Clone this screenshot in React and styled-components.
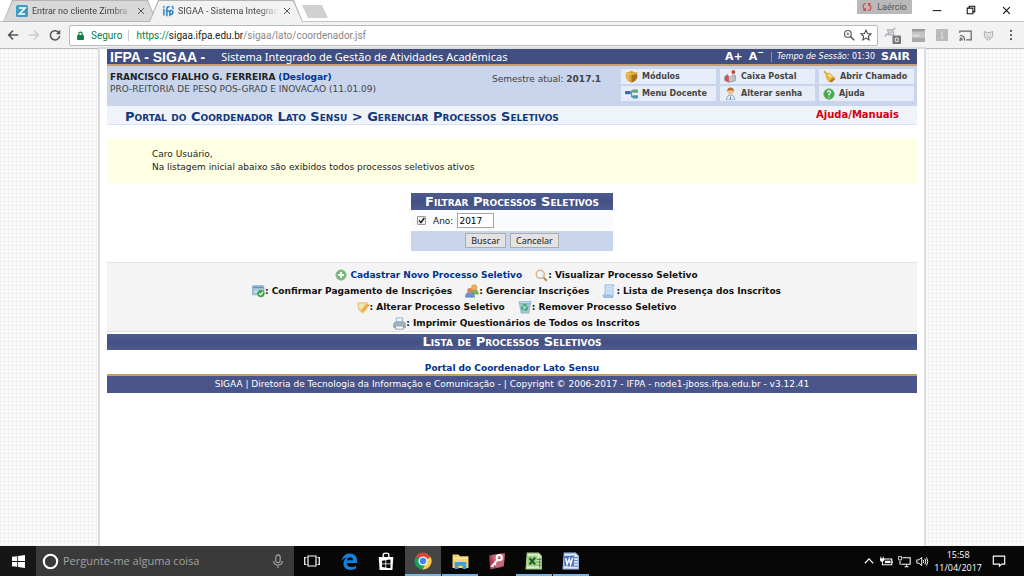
import styled, { createGlobalStyle, css } from 'styled-components'
import { useState } from 'react'

const verdana = '"DejaVu Sans", Verdana, sans-serif'
const tahoma = '"Noto Sans", Tahoma, sans-serif'
const segoe = '"Open Sans", "Segoe UI", sans-serif'
const roboto = 'Roboto, sans-serif'

const GlobalStyle = createGlobalStyle`
  * {
    box-sizing: border-box;
  }
  body {
    margin: 0;
    font-family: ${verdana};
    font-size: 9px;
    color: #222;
  }
  button, input {
    font-family: inherit;
    font-size: inherit;
    margin: 0;
  }
  button {
    cursor: pointer;
  }
  a {
    color: inherit;
    text-decoration: none;
  }
  svg {
    display: block;
    flex: none;
  }
`

const Screen = styled.div`
  display: flex;
  flex-direction: column;
  height: 100vh;
  overflow: hidden;
`

/* ---------- browser ---------- */

const TabStrip = styled.header`
  display: flex;
  align-items: flex-end;
  height: 22px;
  padding-left: 3px;
  background: #fff;
  border-bottom: 1px solid #c4c4c4;
`
const Tab = styled.div`
  position: relative;
  display: flex;
  align-items: center;
  gap: 4px;
  width: 154px;
  height: 22px;
  margin: 0 -8px -1px 0;
  padding: 0 12px 0 13px;
  font-family: ${roboto};
  color: #444;
  z-index: ${p => (p.$active ? 2 : 1)};

  &::before, &::after {
    content: '';
    position: absolute;
    inset: 0;
    clip-path: polygon(0 100%, 9px 0, calc(100% - 9px) 0, 100% 100%);
    background: #b4b4b4;
    z-index: -1;
  }
  &::after {
    inset: 1px 1px ${p => (p.$active ? '0' : '1px')} 1px;
    background: ${p => (p.$active ? '#f2f2f2' : '#d9d9d9')};
  }
`
const TabTitle = styled.span`
  flex: 1;
  overflow: hidden;
  white-space: nowrap;
  line-height: 14px;
  mask-image: linear-gradient(90deg, #000 80%, transparent);
`
const PlainButton = styled.button`
  display: flex;
  align-items: center;
  justify-content: center;
  padding: 0;
  border: 0;
  background: none;
  color: ${p => p.$color || '#555'};
`
const NewTab = styled.button`
  width: 26px;
  height: 13px;
  margin: 0 0 3px 7px;
  padding: 0;
  border: 0;
  background: #d0d0d0;
  clip-path: polygon(0 0, 20px 0, 100% 100%, 6px 100%);
`
const WindowControls = styled.div`
  display: flex;
  align-self: flex-start;
  margin-left: auto;
`
const Profile = styled.button`
  display: flex;
  align-items: center;
  justify-content: center;
  gap: 5px;
  width: 55px;
  height: 14px;
  margin-right: 8px;
  padding: 0;
  border: 0;
  background: #b9b9b9;
  color: #555;
  font-family: ${roboto};
`
const WindowButton = styled(PlainButton)`
  width: 34px;
  height: 20px;
  color: #111;

  &:last-child {
    width: 36px;
  }
`
const Toolbar = styled.nav`
  display: flex;
  align-items: center;
  height: 27px;
  flex: none;
  padding: 0 7px 0 6px;
  background: #f2f2f2;
  border-bottom: 1px solid #b8b8b8;
`
const NavGroup = styled.div`
  display: flex;
  gap: 7px;
  margin-right: 7px;
`
const AddressBar = styled.div`
  display: flex;
  align-items: center;
  flex: 1;
  height: 21px;
  padding: 0 5px 0 6px;
  background: #fff;
  border: 1px solid #b9b9b9;
  border-radius: 2px;
  font-family: ${roboto};
  font-size: 10px;
`
const Secure = styled.span`
  padding: 0 6px 0 6px;
  margin-right: 7px;
  border-right: 1px solid #ccc;
  color: #0b8043;
`
const Url = styled.span`
  flex: 1;
  color: #888;
`
const Scheme = styled.span`
  color: #0b8043;
`
const Host = styled.span`
  color: #222;
`
const AddressIcons = styled.div`
  display: flex;
  gap: 5px;
`
const Extensions = styled.div`
  display: flex;
  align-items: center;
  gap: 11px;
  margin-left: 6px;
`

/* ---------- page ---------- */

const Viewport = styled.main`
  flex: 1;
  min-height: 0;
  background-color: #fcfcfc;
  background-image:
    linear-gradient(#f1f1f1 1px, transparent 1px),
    linear-gradient(90deg, #f1f1f1 1px, transparent 1px);
  background-size: 4px 4px;
`
const Page = styled.div`
  height: 100%;
  margin: 0 100px;
  padding: 0 7px;
  background: #fff;
  box-shadow: 0 0 0 2px #dcdcdc;
`
const TopBar = styled.div`
  display: flex;
  align-items: center;
  height: 17px;
  padding: 0 7px 0 3px;
  background: #404e82;
  border-bottom: 2px solid #c4a077;
  color: #fff;
`
const Brand = styled.h1`
  margin: 0 16px 0 0;
  font: bold 14px/14px "Liberation Sans", Arial, sans-serif;
`
const SystemName = styled.span`
  flex: 1;
  font: 11px/14px ${tahoma};
`
const ZoomButton = styled.button`
  padding: 0;
  margin-right: 6px;
  border: 0;
  background: none;
  color: #fff;
  font: bold 11px/14px ${verdana};

  sup {
    font-size: 8px;
    line-height: 1px;
  }
`
const Session = styled.span`
  padding-left: 5px;
  margin: 0 6px 0 1px;
  border-left: 1px solid #9a8f83;
  font-size: 8px;
  line-height: 10px;
`
const Leave = styled.a`
  font: bold 11px/14px ${verdana};
`
const UserPanel = styled.section`
  display: flex;
  justify-content: space-between;
  height: 40px;
  padding: 3px 3px 0 3px;
  background: #c8d5ec;
`
const UserInfo = styled.div`
  width: 382px;
  padding-top: 2px;
  font-size: 9px;
  line-height: 12px;
  color: #444;
`
const UserName = styled.strong`
  color: #222;
`
const BlueLink = styled.a`
  color: #003390;
  font-weight: bold;
`
const Semester = styled.div`
  flex: 1;
  padding-top: 4px;
  font-size: 9px;
  line-height: 12px;
  color: #444;
`
const Shortcuts = styled.div`
  display: grid;
  grid-template-columns: repeat(3, 95px);
  grid-auto-rows: 15px;
  gap: 2px 4px;
`
const Shortcut = styled.a`
  display: flex;
  align-items: center;
  gap: 4px;
  padding-left: 4px;
  background: #e7edf8;
  color: #444;
  font-size: 8px;
  font-weight: bold;
`
const Breadcrumb = styled.div`
  display: flex;
  justify-content: space-between;
  height: 19px;
  padding: 0 18px;
  background: #eff3fa;
  border-bottom: 1px solid #d9e2f0;
`
const PageTitle = styled.h2`
  margin: 0;
  padding-top: 2px;
  font-size: 13px;
  line-height: 18px;
  font-variant: small-caps;
  color: #12387c;
`
const HelpLink = styled.a`
  font-size: 10px;
  line-height: 18px;
  font-weight: bold;
  color: #d3000f;
`
const Notice = styled.div`
  margin-top: 14px;
  padding: 9px 45px 10px;
  background: #ffffe4;
  font: 9px/13px ${verdana};
`
const NoticeLine = styled.p`
  margin: 0;
`
const FilterForm = styled.form`
  width: 202px;
  margin: 9px auto 11px;
`
const Heading = styled.h3`
  margin: 0;
  height: ${p => p.$height || 17}px;
  background: linear-gradient(#4d5c90, #435084 50%, #4d5c90);
  color: #fff;
  font-size: 13px;
  line-height: ${p => p.$height || 17}px;
  font-variant: small-caps;
  text-align: center;
`
const FilterRow = styled.div`
  display: flex;
  align-items: center;
  height: 21px;
  padding-left: 6px;
  background: #f9fbfd;
  font-family: ${verdana};
`
const Check = styled.input`
  width: 9px;
  height: 9px;
  margin: 0 7px 0 0;
  appearance: none;
  border: 1px solid #999;
  border-radius: 1px;
  background: #eee;

  &:checked {
    background: #eee url("data:image/svg+xml,%3Csvg xmlns='http://www.w3.org/2000/svg' viewBox='0 0 7 7'%3E%3Cpath d='M1 3.5l2 2L6.3 1' fill='none' stroke='%23222' stroke-width='1.5'/%3E%3C/svg%3E");
  }
`
const YearInput = styled.input`
  width: 37px;
  height: 15px;
  margin-left: 4px;
  padding: 0 1px;
  border: 1px solid #a5a5a5;
  background: #fff;
`
const FilterActions = styled.div`
  display: flex;
  justify-content: center;
  gap: 4px;
  height: 20px;
  padding-top: 2px;
  background: #c8d5ec;
`
const ActionButton = styled.button`
  height: 15px;
  padding: 0 5px;
  border: 1px solid #adadad;
  background: #e3e3e3;
  color: #222;
  font: 9px/13px ${tahoma};
`
const Legend = styled.div`
  display: flex;
  flex-direction: column;
  margin-bottom: 2px;
  padding: 4px 0 0 9px;
  background: #f4f4f4;
  border: 1px solid #e2e2e2;
  border-width: 1px 0;
`
const LegendRow = styled.div`
  display: flex;
  justify-content: center;
  gap: 13px;
  height: 16px;
`
const LegendItem = styled.span`
  display: flex;
  align-items: center;
  font-size: 9px;
  font-weight: bold;
  white-space: pre;
  color: #111;

  ${p => p.$link && css`
    gap: 3px;
    color: #003390;
  `}
`
const BackLine = styled.div`
  padding-top: 12px;
  text-align: center;
  font: bold 9px/12px ${verdana};
`
const Footer = styled.footer`
  height: 19px;
  background: #49558a;
  border-top: 2px solid #c4a060;
  color: #fff;
  text-align: center;
  font-size: 9px;
  line-height: 17px;
`

/* ---------- taskbar ---------- */

const Taskbar = styled.footer`
  display: flex;
  align-items: stretch;
  flex: none;
  height: 30px;
  background: #070707;
  color: #fff;
`
const Start = styled(PlainButton)`
  width: 36px;
  background: #161616;
  color: #fff;
`
const Search = styled.label`
  display: flex;
  align-items: center;
  gap: 4px;
  width: 258px;
  padding: 0 9px 0 6px;
  background: #3a3a3a;
`
const SearchInput = styled.input`
  flex: 1;
  min-width: 0;
  padding: 0;
  border: 0;
  outline: 0;
  background: none;
  color: #fff;
  font: 11px/16px ${segoe};

  &::placeholder {
    color: #a2a2a2;
    opacity: 1;
  }
`
const TaskButton = styled(PlainButton)`
  width: 36px;
  margin-right: 1px;
  color: #fff;
  background: ${p => (p.$active ? '#454545' : 'none')};
  border-bottom: 2px solid ${p => (p.$open ? '#76b4e8' : 'transparent')};
  border-top: 2px solid transparent;
`
const Tray = styled.div`
  display: flex;
  align-items: center;
  gap: 5px;
  margin-left: auto;
  padding-right: 18px;
`
const Clock = styled.time`
  margin: 0 5px 0 0;
  text-align: center;
  font: 9px/13px ${segoe};
`

/* ---------- icons ---------- */

const Svg = ({ size = 12, box = 16, children }) => (
  <svg width={size} height={size} viewBox={`0 0 ${box} ${box}`} fill="none" aria-hidden="true">
    {children}
  </svg>
)
const CloseIcon = ({ size = 8 }) => (
  <Svg size={size}><path d="M2 2l12 12M14 2L2 14" stroke="currentColor" strokeWidth="2" /></Svg>
)
const ZimbraIcon = () => (
  <Svg size={12}>
    <rect width="16" height="16" rx="2" fill="#3b9fc4" />
    <path d="M4 4h8L4.500 12H12" stroke="#fff" strokeWidth="2.200" />
  </Svg>
)
const SigaaIcon = () => (
  <Svg size={12}>
    <path d="M2.500 5v9M6.500 15V5q0-3 3.500-3M5 8h5M10.500 15V7M10.500 7.500q4-1 4 2t-4 3M13 1.500q2 1 2 4" stroke="#2585c8" strokeWidth="2" />
    <circle cx="2.500" cy="2.500" r="1.500" fill="#62b2e2" />
  </Svg>
)
const BackIcon = () => (
  <Svg size={14}><path d="M14 8H3M8 3L3 8l5 5" stroke="currentColor" strokeWidth="1.700" /></Svg>
)
const ForwardIcon = () => (
  <Svg size={14}><path d="M2 8h11M8 3l5 5-5 5" stroke="currentColor" strokeWidth="1.700" /></Svg>
)
const ReloadIcon = () => (
  <Svg size={14}>
    <path d="M12.500 5.500A5.300 5.300 0 1 0 13.300 9" stroke="currentColor" strokeWidth="1.800" />
    <path d="M14 2v5H9z" fill="currentColor" />
  </Svg>
)
const LockIcon = () => (
  <Svg size={9}>
    <rect x="2" y="7" width="12" height="9" rx="1" fill="#0b8043" />
    <path d="M5 7V5a3 3 0 0 1 6 0v2" stroke="#0b8043" strokeWidth="2" />
  </Svg>
)
const LensIcon = () => (
  <Svg size={12}>
    <circle cx="6.500" cy="6.500" r="4.500" stroke="#555" strokeWidth="1.500" />
    <path d="M10 10l5 5" stroke="#555" strokeWidth="2" />
    <path d="M4.500 6.500h4M6.500 4.500v4" stroke="#555" />
  </Svg>
)
const StarIcon = () => (
  <Svg size={12}>
    <path d="M8 1.500l2 4.500 4.800.5-3.600 3.200 1 4.800L8 12l-4.200 2.500 1-4.800L1.200 6.500 6 6z" stroke="#444" strokeWidth="1.400" />
  </Svg>
)
const PaintIcon = () => (
  <Svg size={17} box={24}>
    <path d="M1 13l4-4M5 3l2 8M5 11h9l-2-7M6 4h7l3-3" stroke="#a6acb4" strokeWidth="1.800" />
    <circle cx="9.500" cy="7.500" r="2" fill="#b9bfc8" />
    <rect x="12" y="12" width="12" height="12" rx="1" fill="#777" />
    <rect x="16" y="15.500" width="4" height="5" rx="1" stroke="#e5e5e5" strokeWidth="1.500" />
  </Svg>
)
const BannerIcon = () => (
  <Svg size={13}>
    <rect width="16" height="16" fill="#c4c4c4" />
    <path d="M0 1.500h16" stroke="#9c9c9c" strokeWidth="3" />
    <path d="M0 11h16v5H0z" fill="#a9a9a9" />
    <path d="M1 8h8" stroke="#e6e6e6" strokeWidth="2" />
  </Svg>
)
const InfoIcon = () => (
  <Svg size={12}>
    <rect width="16" height="16" rx="1" fill="#bababa" />
    <path d="M8 4v8M6 4h3M6 12h4" stroke="#ddd" strokeWidth="1.500" />
  </Svg>
)
const CastIcon = () => (
  <Svg size={13}>
    <path d="M1 5V2.500h14v11H9M1 8q6 0 6 6M1 11q3 0 3 3" stroke="#666" strokeWidth="1.500" />
    <circle cx="1.500" cy="13.500" r="1.200" fill="#666" />
  </Svg>
)
const ShieldIcon = () => (
  <Svg size={11}>
    <path d="M2 2l3 1.500h6L14 2v6q0 4-6 7-6-3-6-7z" fill="#e6e6e6" stroke="#aaa" strokeWidth="1.400" />
    <path d="M5 7h1M10 7h1M6 10q2 1.500 4 0" stroke="#999" strokeWidth="1.400" />
  </Svg>
)
const DotsIcon = () => (
  <Svg size={12}>
    <circle cx="8" cy="2.500" r="1.500" fill="#555" />
    <circle cx="8" cy="8" r="1.500" fill="#555" />
    <circle cx="8" cy="13.500" r="1.500" fill="#555" />
  </Svg>
)
const SyncIcon = () => (
  <Svg size={10}>
    <path d="M6 2Q1 3 2 9l3 4M2 13.500h3.500V10M10 14q5-1 4-7l-3-4M14 2.500h-3.500V6" stroke="#d2504b" strokeWidth="2" />
  </Svg>
)
const ModulesIcon = () => (
  <Svg size={13}>
    <path d="M1 3q4 0 7-2 3 2 7 2v6q-1 5-7 6.500Q2 14 1 9z" fill="#dba436" />
    <path d="M8 5l7-2v6q-1 5-7 6.500z" fill="#a9711b" />
    <path d="M1.500 4L8 5.500 14.500 4M3.500 6v6" stroke="#f5d478" strokeWidth="1.200" />
  </Svg>
)
const MenuIcon = () => (
  <Svg size={13}>
    <path d="M5 7h3V5h3M8 7v5h3" stroke="#4d9e9c" strokeWidth="1.500" />
    <rect y="5" width="7" height="4" rx="1" fill="#386eaa" />
    <rect x="9" y="3" width="7" height="4" rx="1" fill="#5ba973" />
    <rect x="9" y="10" width="7" height="4" rx="1" fill="#4c91bf" />
  </Svg>
)
const MailboxIcon = () => (
  <Svg size={13}>
    <path d="M1 8l4-3 9 2v6l-8 2-5-2z" fill="#bfc4cc" stroke="#858c98" />
    <path d="M1 8.500q2-4 5-1V15l-5-2z" fill="#c9555c" />
    <path d="M10 7V1h3v3h-2" fill="#d84242" stroke="#b53434" />
    <path d="M4 5l4-3 3 4-4 2z" fill="#fff" stroke="#bbb" strokeWidth=".6" />
  </Svg>
)
const PersonIcon = () => (
  <Svg size={13}>
    <path d="M3 16q0-6 5-6t5 6z" fill="#e8edf5" stroke="#8693a8" />
    <circle cx="8" cy="5.500" r="3.800" fill="#f2c395" />
    <path d="M3.800 5.500q0-5 4.200-5t4.200 5Q8 2.500 3.800 5.500z" fill="#b3702b" />
    <path d="M8 11l-1 4h2z" fill="#3b75b5" />
  </Svg>
)
const BellIcon = () => (
  <Svg size={13}>
    <path d="M2 1l3 3q4-1 6 3l4 3-7 5-3-4Q3 9 4 5L1 3z" fill="#eebb38" stroke="#c48a22" strokeWidth=".6" />
    <ellipse cx="11.500" cy="12.500" rx="3.500" ry="1.600" transform="rotate(-35 11.500 12.500)" fill="#b07c20" />
    <path d="M6 6q3 0 4 3" stroke="#fff0a8" strokeWidth="1.800" />
  </Svg>
)
const HelpIcon = () => (
  <Svg size={12}>
    <circle cx="8" cy="8" r="7" fill="#46a849" stroke="#6fb872" />
    <path d="M5.800 6q.2-2.200 2.200-2.200T10.200 6Q10 7.500 8 8.200V10M8 11.500v1.500" stroke="#fff" strokeWidth="1.700" />
  </Svg>
)
const AddIcon = () => (
  <Svg size={12}>
    <circle cx="8" cy="8" r="7" fill="#74b874" stroke="#9bc79a" />
    <path d="M8 4v8M4 8h8" stroke="#fff" strokeWidth="2.500" />
  </Svg>
)
const ViewIcon = () => (
  <Svg size={13}>
    <path d="M10 10l4.500 4.500" stroke="#bc8548" strokeWidth="2.500" />
    <circle cx="6.500" cy="6.500" r="5" fill="#eef3f7" stroke="#d8b48d" strokeWidth="1.800" />
    <path d="M4 6q.5-2 2.500-2" stroke="#fff" strokeWidth="1.500" />
  </Svg>
)
const PaymentIcon = () => (
  <Svg size={13}>
    <rect x=".5" y="1" width="14" height="11" rx="1" fill="#a9c8df" stroke="#7fa3bd" />
    <path d="M1 3h13" stroke="#6a93b3" strokeWidth="1.800" />
    <path d="M3 8h4" stroke="#e6f0f6" strokeWidth="1.500" />
    <circle cx="11" cy="10.500" r="4.500" fill="#41a34c" />
    <path d="M9 10.500l1.700 1.700L13.500 8.500" stroke="#fff" strokeWidth="1.500" />
  </Svg>
)
const GroupIcon = () => (
  <Svg size={14}>
    <path d="M7 12q0-6 4-6t5 6z" fill="#7cb255" />
    <circle cx="10.500" cy="4" r="3.200" fill="#eab254" stroke="#c88b3c" strokeWidth=".6" />
    <path d="M.5 15q0-5.500 5-5.500t5.500 5.500z" fill="#6695d2" stroke="#4a75af" strokeWidth=".6" />
    <circle cx="5.500" cy="7.500" r="3" fill="#d8806a" />
  </Svg>
)
const ScrollIcon = () => (
  <Svg size={14}>
    <path d="M3.500 1h10.500q-1.500 1-1.500 3v11H2q1.500-1 1.500-3z" fill="#cfe3f7" stroke="#8fb4dd" />
    <path d="M1 12.500h9q0 2 2 2.500H3q-2 0-2-2.500z" fill="#a9cbee" stroke="#78a3d0" strokeWidth=".7" />
    <path d="M5.500 4h5M5.500 6.500h5M5.500 9h5" stroke="#b3d0ec" />
  </Svg>
)
const EditIcon = () => (
  <Svg size={13}>
    <path d="M1 2h12l-1 9-5 4-5-4z" fill="#f3d586" stroke="#e3bf6c" strokeWidth=".8" />
    <path d="M15 5l-7 7-2 1 .5-2.500L13 3.500z" fill="#efab49" stroke="#dc9840" strokeWidth=".7" />
    <path d="M3 5h5M3 7.500h4" stroke="#fff" />
  </Svg>
)
const TrashIcon = () => (
  <Svg size={14}>
    <path d="M1.500 3h13l-2 12h-9z" fill="#9ec6d8" stroke="#85afc4" strokeWidth=".7" />
    <path d="M1 2l14-.5-.5 2.500H1.500z" fill="#c6dfea" stroke="#7aa6bc" strokeWidth=".7" />
    <circle cx="7.500" cy="8.500" r="3" stroke="#3bab62" strokeWidth="2" strokeDasharray="4.500 1.500" />
  </Svg>
)
const PrintIcon = () => (
  <Svg size={13}>
    <path d="M4 7V1h8v6" fill="#eaf3fb" stroke="#8fa8bd" />
    <path d="M1 8l2-2h10l2 2v5H1z" fill="#a3b4c2" stroke="#7a8e9f" />
    <path d="M3 11h10v4H3z" fill="#f5f8fa" stroke="#8496a5" />
  </Svg>
)
const StartIcon = () => (
  <Svg size={13}>
    <path d="M0 2.300l6.500-.9v6.100H0zM7.500 1.200L16 0v7.500H7.500zM0 8.500h6.500v6.100L0 13.700zM7.500 8.500H16V16l-8.500-1.200z" fill="#fff" />
  </Svg>
)
const CortanaIcon = () => (
  <Svg size={17}><circle cx="8" cy="8" r="6.300" stroke="#fff" strokeWidth="2" /></Svg>
)
const MicIcon = () => (
  <Svg size={14}>
    <rect x="5.500" y="1" width="5" height="9" rx="2.500" stroke="#aaa" strokeWidth="1.200" />
    <path d="M3 8q0 4.500 5 4.500T13 8M8 12.500V16" stroke="#aaa" strokeWidth="1.200" />
  </Svg>
)
const TaskViewIcon = () => (
  <Svg size={16}>
    <path d="M4 3h8v10H4zM2.500 4.500H.7v7h1.800M13.500 4.500h1.800v7h-1.800" stroke="#fff" strokeWidth="1.200" />
  </Svg>
)
const EdgeIcon = () => (
  <Svg size={17}>
    <path d="M.8 7.200C1.300 3 4.300.5 8.200.5c4.700 0 7 3.300 7 7v1.900H5.400c0 2.700 2.100 3.700 4.500 3.700 1.600 0 3-.5 4.300-1.200v2.800c-1.500.8-3.200 1.200-5.200 1.200-4 0-6.700-2.200-6.700-6C2.300 7.400 3.700 5.400 6 4.300 4 4.300 2.200 5.200.8 7.200zM5.600 6.800h5.700c0-1.900-.9-2.900-2.700-2.900C7 3.900 5.900 5 5.600 6.800z" fill="#1381dc" />
  </Svg>
)
const StoreIcon = () => (
  <Svg size={18}>
    <path d="M1.500 4.500h13L13.700 16H2.300z" fill="#fff" />
    <path d="M5.500 5V2.500Q5.500 1 8 1t2.500 1.500V5" stroke="#fff" strokeWidth="1.200" />
    <path d="M4.500 7.700l3-.4v2.900h-3zM8.200 7.200l3.800-.5v3.500H8.200zM4.500 10.800h3v3l-3-.4zM8.200 10.800H12v3.600l-3.800-.5z" fill="#0b0b0b" />
  </Svg>
)
const ChromeIcon = () => (
  <Svg size={18}>
    <path d="M8 8L1.500 4.200A7.500 7.500 0 0 1 14.500 4.200z" fill="#dc4437" />
    <path d="M8 8L1.500 4.200A7.500 7.500 0 0 0 7.500 15.500L11 9z" fill="#199f5b" />
    <path d="M8 8l6.700-3.600A7.500 7.500 0 0 1 7.500 15.500L11 9z" fill="#fecf40" />
    <circle cx="8" cy="8" r="3.500" fill="#4285f4" stroke="#fff" strokeWidth="1.200" />
  </Svg>
)
const FolderIcon = () => (
  <Svg size={17}>
    <path d="M.5 1.500H6L7.500 3h8v11H.5z" fill="#f7d371" />
    <path d="M1 5h14" stroke="#fff0bd" />
    <path d="M2.500 15V8.500h11V15h-3.500v-3H6v3z" fill="#3fa0dc" />
  </Svg>
)
const AccessIcon = () => (
  <Svg size={18}>
    <path d="M1 3l12-2 2 1-1 11-12 2.500z" fill="#ad4157" />
    <path d="M3 2.700L15 1l-1 11-7 2z" fill="#c8697a" />
    <circle cx="10" cy="5" r="2.300" stroke="#fff" strokeWidth="1.800" />
    <path d="M8.500 7L3.500 12.500l1.500.5M5.500 10.500l1.500 1" stroke="#fff" strokeWidth="1.600" />
  </Svg>
)
const ExcelIcon = () => (
  <Svg size={18}>
    <path d="M2 1h10l2.500 2.500V15H1z" fill="#d9efc9" stroke="#a5d08d" />
    <path d="M10.500 6.500h4M10.500 9h4M10.500 11.500h4M13 5v9" stroke="#4c9742" />
    <path d="M2 3.500l9-.5-.5 10-8.500-.5z" fill="#9ccf85" />
    <path d="M4 5.500l5 5.500M9 5l-5 6" stroke="#1f5c1c" strokeWidth="1.900" />
  </Svg>
)
const WordIcon = () => (
  <Svg size={18}>
    <path d="M2 1h10l2.500 2.500V15H1z" fill="#dce9fa" stroke="#a9c1e8" />
    <path d="M11 5h3M11 7.500h3M11 10h3M11 12.500h3" stroke="#5f84c2" />
    <path d="M2 3.500l9-.5-.5 10-8.500-.5z" fill="#4971bb" />
    <path d="M3.300 5.500l1.200 5.500 2-5 1.200 5 1.800-6" stroke="#f2f6ff" strokeWidth="1.400" />
  </Svg>
)
const ChevronIcon = () => (
  <Svg size={12}><path d="M2.500 11L8 5l5.500 6" stroke="#fff" strokeWidth="1.500" /></Svg>
)
const BatteryIcon = () => (
  <Svg size={13}>
    <path d="M5 5h9.500v7H3V9M15 7v3" stroke="#fff" strokeWidth="1.300" />
    <path d="M6 7h7v3H6z" fill="#fff" />
    <path d="M1 2v2M4 2v2M0 4.500h5v2L2.500 8.500 0 6.500z" fill="#fff" stroke="#fff" />
  </Svg>
)
const NetworkIcon = () => (
  <Svg size={13}>
    <path d="M5.500 3.500H15v8H4M8 14.500h5M10.500 12v2M2.500 7v5" stroke="#fff" strokeWidth="1.300" />
    <path d="M.5 2h4v4h-4z" stroke="#fff" />
  </Svg>
)
const SpeakerIcon = () => (
  <Svg size={13}>
    <path d="M1 6h2.500L7 3v10L3.500 10H1z" stroke="#fff" strokeWidth="1.200" />
    <path d="M9 6q1 2 0 4M11 4.500q2 3.500 0 7M13 3q3 5 0 10" stroke="#fff" strokeWidth="1.200" />
  </Svg>
)
const ActionCenterIcon = () => (
  <Svg size={14}><path d="M1.500 2.500h13v9H11L8.500 14v-2.500h-7z" stroke="#fff" strokeWidth="1.300" /></Svg>
)

/* ---------- data ---------- */

const shortcuts = [
  { text: 'Módulos', Icon: ModulesIcon },
  { text: 'Caixa Postal', Icon: MailboxIcon },
  { text: 'Abrir Chamado', Icon: BellIcon },
  { text: 'Menu Docente', Icon: MenuIcon },
  { text: 'Alterar senha', Icon: PersonIcon },
  { text: 'Ajuda', Icon: HelpIcon },
]

const legend = [
  [
    { text: 'Cadastrar Novo Processo Seletivo', Icon: AddIcon, link: true },
    { text: 'Visualizar Processo Seletivo', Icon: ViewIcon },
  ],
  [
    { text: 'Confirmar Pagamento de Inscrições', Icon: PaymentIcon },
    { text: 'Gerenciar Inscrições', Icon: GroupIcon },
    { text: 'Lista de Presença dos Inscritos', Icon: ScrollIcon },
  ],
  [
    { text: 'Alterar Processo Seletivo', Icon: EditIcon },
    { text: 'Remover Processo Seletivo', Icon: TrashIcon },
  ],
  [{ text: 'Imprimir Questionários de Todos os Inscritos', Icon: PrintIcon }],
]

const tasks = [
  { name: 'Visão de tarefas', Icon: TaskViewIcon },
  { name: 'Edge', Icon: EdgeIcon },
  { name: 'Loja', Icon: StoreIcon },
  { name: 'Chrome', Icon: ChromeIcon, open: true, active: true },
  { name: 'Arquivos', Icon: FolderIcon, open: true },
  { name: 'Access', Icon: AccessIcon },
  { name: 'Excel', Icon: ExcelIcon, open: true },
  { name: 'Word', Icon: WordIcon, open: true },
]

function Browser () {
  return (
    <>
      <TabStrip>
        <Tab>
          <ZimbraIcon />
          <TabTitle>Entrar no cliente Zimbra</TabTitle>
          <PlainButton aria-label="Fechar"><CloseIcon /></PlainButton>
        </Tab>
        <Tab $active>
          <SigaaIcon />
          <TabTitle>SIGAA - Sistema Integrac</TabTitle>
          <PlainButton aria-label="Fechar"><CloseIcon /></PlainButton>
        </Tab>
        <NewTab aria-label="Nova guia" />
        <WindowControls>
          <Profile><SyncIcon />Laércio</Profile>
          <WindowButton aria-label="Minimizar">
            <Svg size={10}><path d="M1 9h14" stroke="currentColor" strokeWidth="1.600" /></Svg>
          </WindowButton>
          <WindowButton aria-label="Restaurar">
            <Svg size={10}><path d="M2 5h9v9H2zM5 5V2h9v9h-3" stroke="currentColor" strokeWidth="1.700" /></Svg>
          </WindowButton>
          <WindowButton aria-label="Fechar janela"><CloseIcon size={9} /></WindowButton>
        </WindowControls>
      </TabStrip>
      <Toolbar>
        <NavGroup>
          <PlainButton aria-label="Voltar"><BackIcon /></PlainButton>
          <PlainButton aria-label="Avançar" $color="#ccc"><ForwardIcon /></PlainButton>
          <PlainButton aria-label="Recarregar"><ReloadIcon /></PlainButton>
        </NavGroup>
        <AddressBar>
          <LockIcon />
          <Secure>Seguro</Secure>
          <Url><Scheme>https://</Scheme><Host>sigaa.ifpa.edu.br</Host>/sigaa/lato/coordenador.jsf</Url>
          <AddressIcons><LensIcon /><StarIcon /></AddressIcons>
        </AddressBar>
        <Extensions>
          <PaintIcon />
          <BannerIcon />
          <InfoIcon />
          <CastIcon />
          <ShieldIcon />
          <DotsIcon />
        </Extensions>
      </Toolbar>
    </>
  )
}

function Filter () {
  const [year, setYear] = useState('2017')
  const [byYear, setByYear] = useState(true)

  const handleSubmit = (e) => {
    e.preventDefault()
  }

  return (
    <FilterForm onSubmit={handleSubmit}>
      <Heading>Filtrar Processos Seletivos</Heading>
      <FilterRow>
        <Check
          id="byYear"
          type="checkbox"
          aria-label="Filtrar por ano"
          checked={byYear}
          onChange={(e) => setByYear(e.target.checked)}
        />
        <label htmlFor="year">Ano:</label>
        <YearInput id="year" value={year} onChange={(e) => setYear(e.target.value)} />
      </FilterRow>
      <FilterActions>
        <ActionButton type="submit">Buscar</ActionButton>
        <ActionButton type="button">Cancelar</ActionButton>
      </FilterActions>
    </FilterForm>
  )
}

function Portal () {
  return (
    <Viewport>
      <Page>
        <TopBar>
          <Brand>IFPA - SIGAA -</Brand>
          <SystemName>Sistema Integrado de Gestão de Atividades Acadêmicas</SystemName>
          <ZoomButton>A+</ZoomButton>
          <ZoomButton>A<sup>−</sup></ZoomButton>
          <Session><em>Tempo de Sessão:</em> 01:30</Session>
          <Leave href="#sair">SAIR</Leave>
        </TopBar>
        <UserPanel>
          <UserInfo>
            <UserName>FRANCISCO FIALHO G. FERREIRA</UserName> <BlueLink href="#deslogar">(Deslogar)</BlueLink>
            <br />
            PRO-REITORIA DE PESQ POS-GRAD E INOVACAO (11.01.09)
          </UserInfo>
          <Semester>Semestre atual: <strong>2017.1</strong></Semester>
          <Shortcuts>
            {shortcuts.map(({ text, Icon }) => (
              <Shortcut key={text} href="#menu"><Icon />{text}</Shortcut>
            ))}
          </Shortcuts>
        </UserPanel>
        <Breadcrumb>
          <PageTitle>Portal do Coordenador Lato Sensu &gt; Gerenciar Processos Seletivos</PageTitle>
          <HelpLink href="#manuais">Ajuda/Manuais</HelpLink>
        </Breadcrumb>
        <Notice>
          <NoticeLine>Caro Usuário,</NoticeLine>
          <NoticeLine>Na listagem inicial abaixo são exibidos todos processos seletivos ativos</NoticeLine>
        </Notice>
        <Filter />
        <Legend>
          {legend.map((row, i) => (
            <LegendRow key={i}>
              {row.map(({ text, Icon, link }) => (
                <LegendItem key={text} $link={link}>
                  <Icon />
                  {link ? <a href="#cadastrar">{text}</a> : `: ${text}`}
                </LegendItem>
              ))}
            </LegendRow>
          ))}
        </Legend>
        <Heading $height={16}>Lista de Processos Seletivos</Heading>
        <BackLine><BlueLink href="#portal">Portal do Coordenador Lato Sensu</BlueLink></BackLine>
        <Footer>
          SIGAA | Diretoria de Tecnologia da Informação e Comunicação - | Copyright © 2006-2017 - IFPA - node1-jboss.ifpa.edu.br - v3.12.41
        </Footer>
      </Page>
    </Viewport>
  )
}

function WindowsBar () {
  return (
    <Taskbar>
      <Start aria-label="Iniciar"><StartIcon /></Start>
      <Search>
        <CortanaIcon />
        <SearchInput aria-label="Pesquisar" placeholder="Pergunte-me alguma coisa" />
        <MicIcon />
      </Search>
      {tasks.map(({ name, Icon, open, active }) => (
        <TaskButton key={name} aria-label={name} $open={open} $active={active}><Icon /></TaskButton>
      ))}
      <Tray>
        <ChevronIcon />
        <BatteryIcon />
        <NetworkIcon />
        <SpeakerIcon />
        <Clock>15:58<br />11/04/2017</Clock>
        <ActionCenterIcon />
      </Tray>
    </Taskbar>
  )
}

export default function App () {
  return (
    <>
      <GlobalStyle />
      <Screen>
        <Browser />
        <Portal />
        <WindowsBar />
      </Screen>
    </>
  )
}
